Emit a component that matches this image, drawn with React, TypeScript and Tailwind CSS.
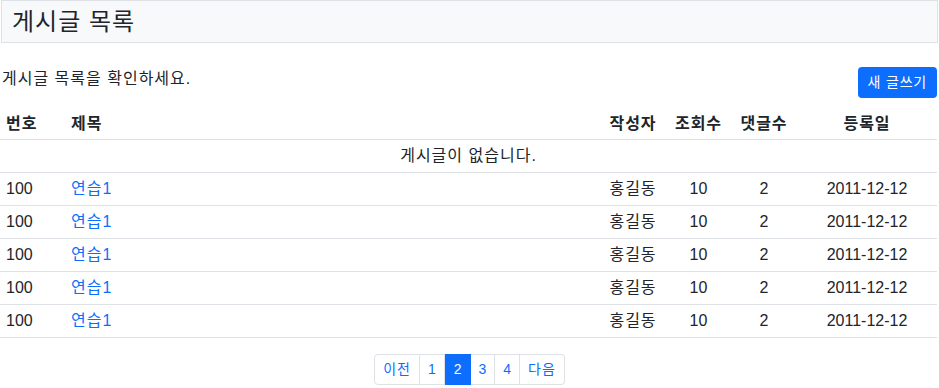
import React from "react";

const rows = Array.from({ length: 5 }, () => ({
  no: "100",
  title: "연습1",
  writer: "홍길동",
  views: "10",
  comments: "2",
  date: "2011-12-12",
}));

export default function App() {
  return (
    <div
      className="w-[939px] h-[388px] bg-white text-[#212529] text-[16px] leading-[24px]"
      style={{ fontFamily: '"Liberation Sans","Noto Sans CJK KR",sans-serif' }}
    >
      <div className="mx-px h-[43px] border border-[#dee2e6] bg-[#f8f9fa] px-[10px] flex items-center">
        <h1 className="text-[24px] leading-[30px] font-normal tracking-[1px]">게시글 목록</h1>
      </div>

      <div className="mt-[24px] flex justify-between items-start pl-[2px] pr-[2px]">
        <p className="tracking-[1px]">게시글 목록을 확인하세요.</p>
        <button className="h-[31px] px-[10px] rounded-[4px] bg-[#0d6efd] text-white text-[14px] leading-[21px] tracking-[0.8px]">
          새 글쓰기
        </button>
      </div>

      <table className="mt-[11px] w-[937px] border-collapse table-fixed">
        <colgroup>
          <col className="w-[65px]" />
          <col />
          <col className="w-[66px]" />
          <col className="w-[65px]" />
          <col className="w-[66px]" />
          <col className="w-[140px]" />
        </colgroup>
        <thead>
          <tr className="h-[30px] border-b border-[#dee2e6] font-bold tracking-[1px]">
            <th className="px-[6px] text-left font-bold">번호</th>
            <th className="px-[6px] text-left font-bold">제목</th>
            <th className="text-center font-bold">작성자</th>
            <th className="text-center font-bold">조회수</th>
            <th className="text-center font-bold">댓글수</th>
            <th className="text-center font-bold">등록일</th>
          </tr>
        </thead>
        <tbody>
          <tr className="h-[33px] border-b border-[#dee2e6]">
            <td colSpan={6} className="text-center tracking-[1px]">
              게시글이 없습니다.
            </td>
          </tr>
          {rows.map((r, i) => (
            <tr key={i} className="h-[33px] border-b border-[#dee2e6]">
              <td className="px-[6px]">{r.no}</td>
              <td className="px-[6px]">
                <a href="#" className="text-[#0d6efd] tracking-[1px]">
                  {r.title}
                </a>
              </td>
              <td className="text-center tracking-[1px]">{r.writer}</td>
              <td className="text-center">{r.views}</td>
              <td className="text-center">{r.comments}</td>
              <td className="text-center">{r.date}</td>
            </tr>
          ))}
        </tbody>
      </table>

      <div className="mt-[16px] flex justify-center">
        <ul className="flex text-[14px] leading-[21px] text-[#0d6efd]">
          <li className="px-[8px] py-[4px] border border-[#dee2e6] rounded-l-[4px] tracking-[1px]">이전</li>
          <li className="px-[8px] py-[4px] border border-l-0 border-[#dee2e6]">1</li>
          <li className="px-[8px] py-[4px] border border-[#0d6efd] bg-[#0d6efd] text-white">2</li>
          <li className="px-[8px] py-[4px] border border-l-0 border-[#dee2e6]">3</li>
          <li className="px-[8px] py-[4px] border border-l-0 border-[#dee2e6]">4</li>
          <li className="px-[8px] py-[4px] border border-l-0 border-[#dee2e6] rounded-r-[4px] tracking-[1px]">다음</li>
        </ul>
      </div>
    </div>
  );
}
